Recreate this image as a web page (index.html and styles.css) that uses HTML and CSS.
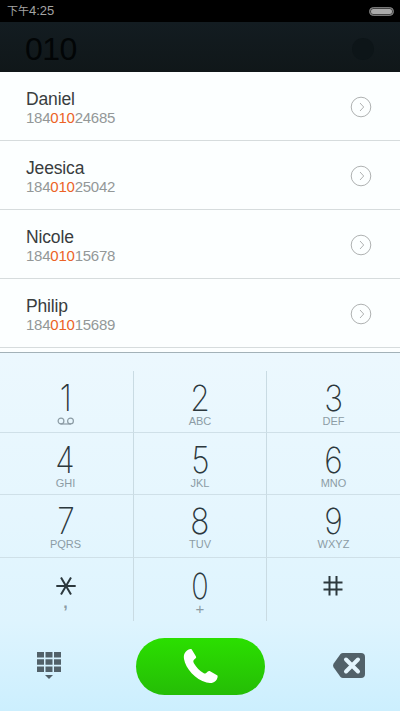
FILE: index.html
```
<!DOCTYPE html>
<html lang="zh-CN">
<head>
<meta charset="utf-8">
<title>Dialer</title>
<link rel="stylesheet" href="styles.css">
</head>
<body>
<div class="phone">
  <header class="status"><span><span class="period">下午</span>4:25</span><i class="battery"></i></header>
  <div class="query"><span>010</span><i class="clear"></i></div>
  <ul class="contacts">
    <li class="contact"><div><div class="name">Daniel</div><div class="number">184<b>010</b>24685</div></div><svg class="more" viewBox="0 0 22 22"><circle cx="11" cy="11" r="9.8"/><path d="M10 7l3.7 4-3.7 4"/></svg></li>
    <li class="contact"><div><div class="name">Jeesica</div><div class="number">184<b>010</b>25042</div></div><svg class="more" viewBox="0 0 22 22"><circle cx="11" cy="11" r="9.8"/><path d="M10 7l3.7 4-3.7 4"/></svg></li>
    <li class="contact"><div><div class="name">Nicole</div><div class="number">184<b>010</b>15678</div></div><svg class="more" viewBox="0 0 22 22"><circle cx="11" cy="11" r="9.8"/><path d="M10 7l3.7 4-3.7 4"/></svg></li>
    <li class="contact"><div><div class="name">Philip</div><div class="number">184<b>010</b>15689</div></div><svg class="more" viewBox="0 0 22 22"><circle cx="11" cy="11" r="9.8"/><path d="M10 7l3.7 4-3.7 4"/></svg></li>
  </ul>
  <section class="dialer">
    <div class="keys">
      <div class="key"><span class="digit">1</span><svg class="voicemail" viewBox="0 0 18 9"><circle cx="4" cy="4" r="2.900"/><circle cx="13.500" cy="4" r="2.900"/><path d="M3.500 7h10.500"/></svg></div>
      <div class="key"><span class="digit">2</span><span class="letters">ABC</span></div>
      <div class="key"><span class="digit">3</span><span class="letters">DEF</span></div>
      <div class="key"><span class="digit">4</span><span class="letters">GHI</span></div>
      <div class="key"><span class="digit">5</span><span class="letters">JKL</span></div>
      <div class="key"><span class="digit">6</span><span class="letters">MNO</span></div>
      <div class="key upper"><span class="digit">7</span><span class="letters">PQRS</span></div>
      <div class="key upper"><span class="digit">8</span><span class="letters">TUV</span></div>
      <div class="key upper"><span class="digit">9</span><span class="letters">WXYZ</span></div>
      <div class="key"><svg class="symbol" viewBox="0 0 20 26"><path d="M.3 13h19.4M5 4.600l10 16.800M15 4.600L5 21.400"/></svg><span class="letters comma">,</span></div>
      <div class="key"><span class="digit zero">0</span><span class="letters plus">+</span></div>
      <div class="key"><svg class="symbol hash" viewBox="0 0 20 26"><path d="M.5 9.500h19M.5 16.500h19M6.500 3v19.500M13.500 3v19.500"/></svg></div>
    </div>
    <div class="actions">
      <svg class="grid-icon" viewBox="0 0 24 27"><path d="M0 0h7v5.500H0zM8.500 0h7v5.500h-7zM17 0h7v5.500h-7zM0 7.200h7v5.500H0zM8.500 7.200h7v5.500h-7zM17 7.200h7v5.500h-7zM0 14.400h7v5.500H0zM8.500 14.400h7v5.500h-7zM17 14.400h7v5.500h-7zM8 23h8l-4 4z"/></svg>
      <div class="call"><svg viewBox="0 0 36 36"><path d="M2.500 4C4.500 1.700 6.800.700 8.600 1.200L13 8.400C13.400 9.300 13 10 12.300 10.600L10.800 12C10 13 10.300 14 10.900 15.200C13.500 19.700 16.500 22.700 20.800 25.200C22 25.800 22.800 25.700 23.500 24.800L24.800 23.600C25.500 22.900 26.300 22.800 27.100 23.300L34.500 27.500C35 29 34.300 31 32.800 32.700C30.500 35.100 27 35.400 23.500 34.500C12.500 31.500 2.500 20.500 1 11C.500 8.200 1 5.700 2.500 4z"/></svg></div>
      <svg class="delete" viewBox="0 0 32 25"><path class="shape" d="M10 0h18q4 0 4 4v17q0 4-4 4H10q-1.500 0-2.500-1L.7 14.500Q-.5 12.500.7 10.500L7.500 1Q8.500 0 10 0z"/><path class="cross" d="M13 6.500l12 12M25 6.500l-12 12"/></svg>
    </div>
  </section>
</div>
</body>
</html>
```
FILE: styles.css
```
* { box-sizing: border-box; }
body { margin: 0; font-family: "Liberation Sans", "Noto Sans CJK SC", sans-serif; }
.phone { width: 400px; height: 711px; display: flex; flex-direction: column; background: #fcffff; overflow: hidden; }
.status { height: 22px; background: #000; color: #a4a4a4; display: flex; align-items: center; justify-content: space-between; padding: 0 6px 0 7px; font-size: 13px; line-height: 22px; }
.period { font-size: 11px; }
.battery { width: 25px; height: 9px; border-radius: 5px; background: #aaa; border: 1px solid #777; box-shadow: inset 0 0 0 1px #444; }
.query { height: 50px; background: linear-gradient(#131c21, #101719); display: flex; align-items: center; justify-content: space-between; padding: 4px 26px 0 25px; font-size: 32px; letter-spacing: -.6px; color: #020506; }
.clear { width: 22px; height: 22px; border-radius: 50%; background: #0d1518; }
.contacts { list-style: none; margin: 0; padding: 0; height: 280px; }
.contact { height: 69px; border-bottom: 1px solid #d6dcdd; display: flex; justify-content: space-between; padding: 17px 28px 0 26px; }
.name { font-size: 17.5px; line-height: 20px; letter-spacing: -.15px; color: #393d3e; }
.number { font-size: 15px; line-height: 18px; letter-spacing: -.24px; color: #939898; }
.number b { font-weight: 400; color: #ec6326; }
.more { width: 22px; height: 22px; margin-top: 6.5px; fill: none; stroke: #afb2b2; stroke-width: 1; }
.dialer { height: 359px; border-top: 1px solid #a3b2b8; background: linear-gradient(#ecf8fe 0, #e5f6fe 45%, #def4fe 75%, #cceffe 100%); }
.keys { display: grid; grid-template-columns: 134px 133px 133px; grid-template-rows: 62px 62px 63px 63px; padding-top: 18px; }
.key { display: flex; flex-direction: column; align-items: center; border-right: 1px solid #c9dbe3; border-bottom: 1px solid #cfe0e8; }
.key:nth-child(3n) { border-right: 0; }
.key:nth-child(n+10) { border-bottom: 0; }
.key:nth-child(3n+1) { padding-right: 2px; }
.digit { font-family: Inter, sans-serif; font-weight: 250; font-size: 36px; line-height: 36px; height: 35px; margin-top: 9px; color: #2c383d; transform: scaleX(.88); }
.upper .digit { margin-top: 8px; }
.zero { margin-top: 10px; transform: scaleX(.8); }
.letters { font-size: 11px; line-height: 12px; color: #8c9ca5; }
.voicemail { width: 18px; height: 9px; flex: none; margin-top: 2px; fill: none; stroke: #8c9ca5; stroke-width: 1.2; }
.symbol { width: 20px; height: 26px; margin-top: 15px; fill: none; stroke: #2c383d; stroke-width: 2; }
.hash { margin-right: 1px; }
.comma { font-size: 16px; font-weight: 700; margin-top: -2px; }
.plus { font-size: 15px; }
.actions { display: grid; grid-template-columns: 99px 129px 1fr; align-items: center; height: 90px; padding: 0 35px 0 37px; }
.grid-icon { width: 24px; height: 27px; margin-top: -2px; fill: #526169; }
.call { width: 129px; height: 57px; border-radius: 29px; background: linear-gradient(#2bdf00, #25bd06); display: flex; align-items: center; justify-content: center; }
.call svg { width: 36px; height: 36px; fill: #fff; }
.delete { width: 32px; height: 25px; margin-top: -1px; justify-self: end; }
.shape { fill: #526169; }
.cross { fill: none; stroke: #e4f5fd; stroke-width: 4; stroke-linecap: round; }
```
